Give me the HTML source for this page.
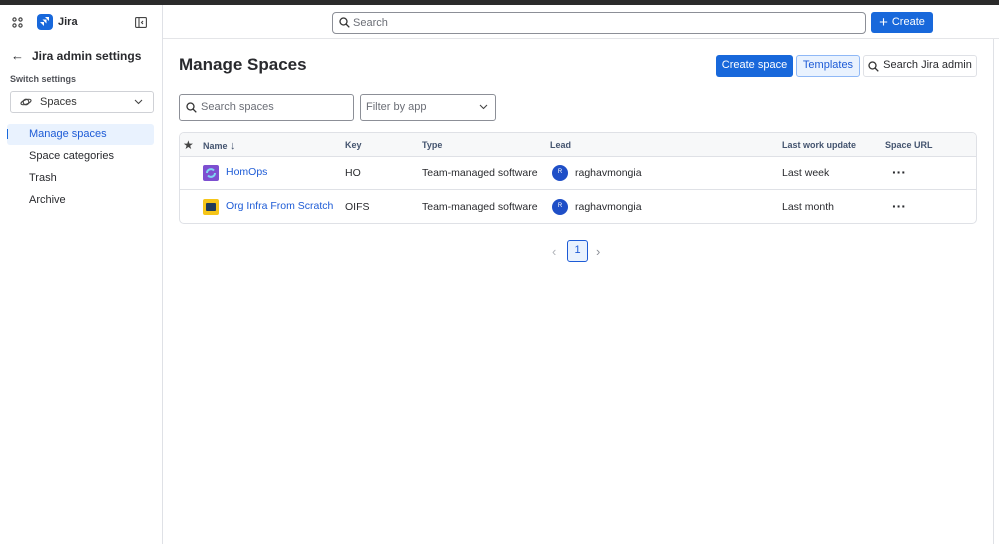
<!DOCTYPE html>
<html><head><style>
*{box-sizing:border-box;margin:0;padding:0}
body{width:999px;height:544px;background:#fff;font-family:"Liberation Sans",sans-serif;color:#292a2e;position:relative;overflow:hidden;font-size:11px;line-height:1.2}
.a{position:absolute}
.topbar{left:0;top:0;width:999px;height:5px;background:#2b2b2b}
.hdrline{left:163px;top:38px;width:836px;height:1px;background:#e4e5e8}
.side{left:162px;top:5px;width:1px;height:539px;background:#dfe1e6}
.rl{left:993px;top:39px;width:1px;height:505px;background:#dfe1e6}
.btn{position:absolute;border-radius:3px;font-size:11px;display:flex;align-items:center;justify-content:center}
.th{font-weight:bold;font-size:9px;color:#44546f;top:140px}
.td{font-size:10.5px;color:#292a2e}
.lnk{color:#1d5bd6}
.av{width:16px;height:16px;border-radius:50%;background:#1f4fc7;color:#fff;font-size:6px;display:flex;align-items:center;justify-content:center}
</style></head><body>
<div class="a topbar"></div>
<div class="a side"></div>
<div class="a hdrline"></div>
<div class="a rl"></div>
<svg class="a" style="left:12px;top:17px" width="11" height="11" viewBox="0 0 11 11" fill="none" stroke="#444" stroke-width="1.2"><circle cx="2.5" cy="2.5" r="1.6"/><circle cx="8.5" cy="2.5" r="1.6"/><circle cx="2.5" cy="8.5" r="1.6"/><circle cx="8.5" cy="8.5" r="1.6"/></svg>
<div class="a" style="left:37px;top:14px;width:16px;height:16px;background:#1868db;border-radius:4px"><svg width="16" height="16" viewBox="0 0 16 16" fill="#fff"><path d="M8 3h4v4zM5.5 5.5h4v4zM3 8h4v4z"/></svg></div>
<div class="a" style="left:58px;top:16px;font-weight:bold;font-size:11px">Jira</div>
<svg class="a" style="left:135px;top:17px" width="12" height="11" viewBox="0 0 12 11" fill="none" stroke="#444" stroke-width="1.1"><rect x=".6" y=".6" width="10.8" height="9.8" rx="1"/><path d="M4 .6v9.8M8 4l-1.5 1.5L8 7"/></svg>
<div class="a" style="left:11px;top:48px;font-size:13px">←</div>
<div class="a" style="left:32px;top:49px;font-weight:bold;font-size:12px">Jira admin settings</div>
<div class="a" style="left:10px;top:74px;font-size:9px;font-weight:bold;color:#505258">Switch settings</div>
<div class="a" style="left:10px;top:91px;width:144px;height:22px;border:1px solid #cfd1d6;border-radius:3px"></div>
<svg class="a" style="left:20px;top:97px" width="12" height="10" viewBox="0 0 12 10" fill="none" stroke="#444" stroke-width="1.1"><ellipse cx="6" cy="5" rx="5.3" ry="2.2" transform="rotate(-20 6 5)"/><circle cx="6" cy="5" r="2.8"/></svg>
<div class="a" style="left:40px;top:96px;font-size:11px;color:#333">Spaces</div>
<svg class="a" style="left:134px;top:99px" width="9" height="6" viewBox="0 0 9 6" fill="none" stroke="#444" stroke-width="1.1"><path d="M1 1l3.5 3.5L8 1"/></svg>
<div class="a" style="left:7px;top:124px;width:147px;height:21px;background:#e9f2fe;border-radius:3px"></div>
<div class="a" style="left:7px;top:129px;width:1px;height:10px;background:#1868db"></div>
<div class="a" style="left:29px;top:128px;color:#1d5bd6">Manage spaces</div>
<div class="a" style="left:29px;top:150px">Space categories</div>
<div class="a" style="left:29px;top:172px">Trash</div>
<div class="a" style="left:29px;top:194px">Archive</div>
<div class="a" style="left:332px;top:12px;width:534px;height:22px;border:1px solid #8c8f97;border-radius:4px"></div>
<svg class="a" style="left:339px;top:17px" width="11" height="11" viewBox="0 0 11 11" fill="none" stroke="#333" stroke-width="1.3"><circle cx="4.5" cy="4.5" r="3.5"/><path d="M7 7l3.3 3.3"/></svg>
<div class="a" style="left:353px;top:17px;color:#6b6e76">Search</div>
<div class="btn" style="left:871px;top:12px;width:62px;height:21px;background:#1868db;color:#fff;font-size:11px"><span style="font-size:15px;margin-right:4px;line-height:1">+</span>Create</div>
<div class="a" style="left:179px;top:55px;font-weight:bold;font-size:17px">Manage Spaces</div>
<div class="btn" style="left:716px;top:55px;width:77px;height:22px;background:#1868db;color:#fff">Create space</div>
<div class="btn" style="left:796px;top:55px;width:64px;height:22px;background:#e9f2fe;border:1px solid #8fb8f6;color:#1d5bd6">Templates</div>
<div class="btn" style="left:863px;top:55px;width:114px;height:22px;border:1px solid #dfe1e6;color:#292a2e"><svg width="11" height="11" viewBox="0 0 11 11" fill="none" stroke="#333" stroke-width="1.3" style="margin-right:4px"><circle cx="4.5" cy="4.5" r="3.5"/><path d="M7 7l3.3 3.3"/></svg>Search Jira admin</div>
<div class="a" style="left:179px;top:94px;width:175px;height:27px;border:1px solid #8c8f97;border-radius:3px"></div>
<svg class="a" style="left:186px;top:102px" width="11" height="11" viewBox="0 0 11 11" fill="none" stroke="#333" stroke-width="1.3"><circle cx="4.5" cy="4.5" r="3.5"/><path d="M7 7l3.3 3.3"/></svg>
<div class="a" style="left:201px;top:101px;color:#6b6e76">Search spaces</div>
<div class="a" style="left:360px;top:94px;width:136px;height:27px;border:1px solid #8c8f97;border-radius:3px"></div>
<div class="a" style="left:366px;top:101px;color:#6b6e76">Filter by app</div>
<svg class="a" style="left:479px;top:104px" width="9" height="6" viewBox="0 0 9 6" fill="none" stroke="#444" stroke-width="1.1"><path d="M1 1l3.5 3.5L8 1"/></svg>
<div class="a" style="left:179px;top:132px;width:798px;height:92px;border:1px solid #dfe1e6;border-radius:5px;overflow:hidden">
<div style="height:24px;background:#f7f8f9;border-bottom:1px solid #dfe1e6"></div>
<div style="height:33px;border-bottom:1px solid #dfe1e6"></div>
</div>
<div class="a" style="left:183px;top:138px;font-size:12px;color:#444">★</div>
<div class="a th" style="left:203px">Name <span style="font-size:11px">↓</span></div>
<div class="a th" style="left:345px">Key</div>
<div class="a th" style="left:422px">Type</div>
<div class="a th" style="left:550px">Lead</div>
<div class="a th" style="left:782px">Last work update</div>
<div class="a th" style="left:885px">Space URL</div>
<div class="a" style="left:203px;top:165px;width:16px;height:16px;background:#7d4fd0;border-radius:2px"><svg width="16" height="16" viewBox="0 0 16 16" fill="none" stroke="#7fd6f2" stroke-width="2"><path d="M4 8a4 4 0 0 1 7-2.5M12 8a4 4 0 0 1-7 2.5"/></svg></div>
<div class="a td lnk" style="left:226px;top:166px">HomOps</div>
<div class="a td" style="left:345px;top:167px">HO</div>
<div class="a td" style="left:422px;top:167px">Team-managed software</div>
<div class="a av" style="left:552px;top:165px">R</div>
<div class="a td" style="left:575px;top:167px">raghavmongia</div>
<div class="a td" style="left:782px;top:167px">Last week</div>
<div class="a" style="left:892px;top:164px;font-size:14px;font-weight:bold">···</div>
<div class="a" style="left:203px;top:199px;width:16px;height:16px;background:#f5c518;border-radius:2px"><div style="margin:4px 3px;width:10px;height:8px;background:#1f3a5a;border-radius:1px"></div></div>
<div class="a td lnk" style="left:226px;top:200px">Org Infra From Scratch</div>
<div class="a td" style="left:345px;top:201px">OIFS</div>
<div class="a td" style="left:422px;top:201px">Team-managed software</div>
<div class="a av" style="left:552px;top:199px">R</div>
<div class="a td" style="left:575px;top:201px">raghavmongia</div>
<div class="a td" style="left:782px;top:201px">Last month</div>
<div class="a" style="left:892px;top:198px;font-size:14px;font-weight:bold">···</div>
<div class="a" style="left:552px;top:244px;color:#b0b3b9;font-size:13px">‹</div>
<div class="btn" style="left:567px;top:240px;width:21px;height:22px;background:#e9f2fe;border:1px solid #1d5bd6;color:#1d5bd6">1</div>
<div class="a" style="left:596px;top:244px;color:#8c8f97;font-size:13px">›</div>
</body></html>
